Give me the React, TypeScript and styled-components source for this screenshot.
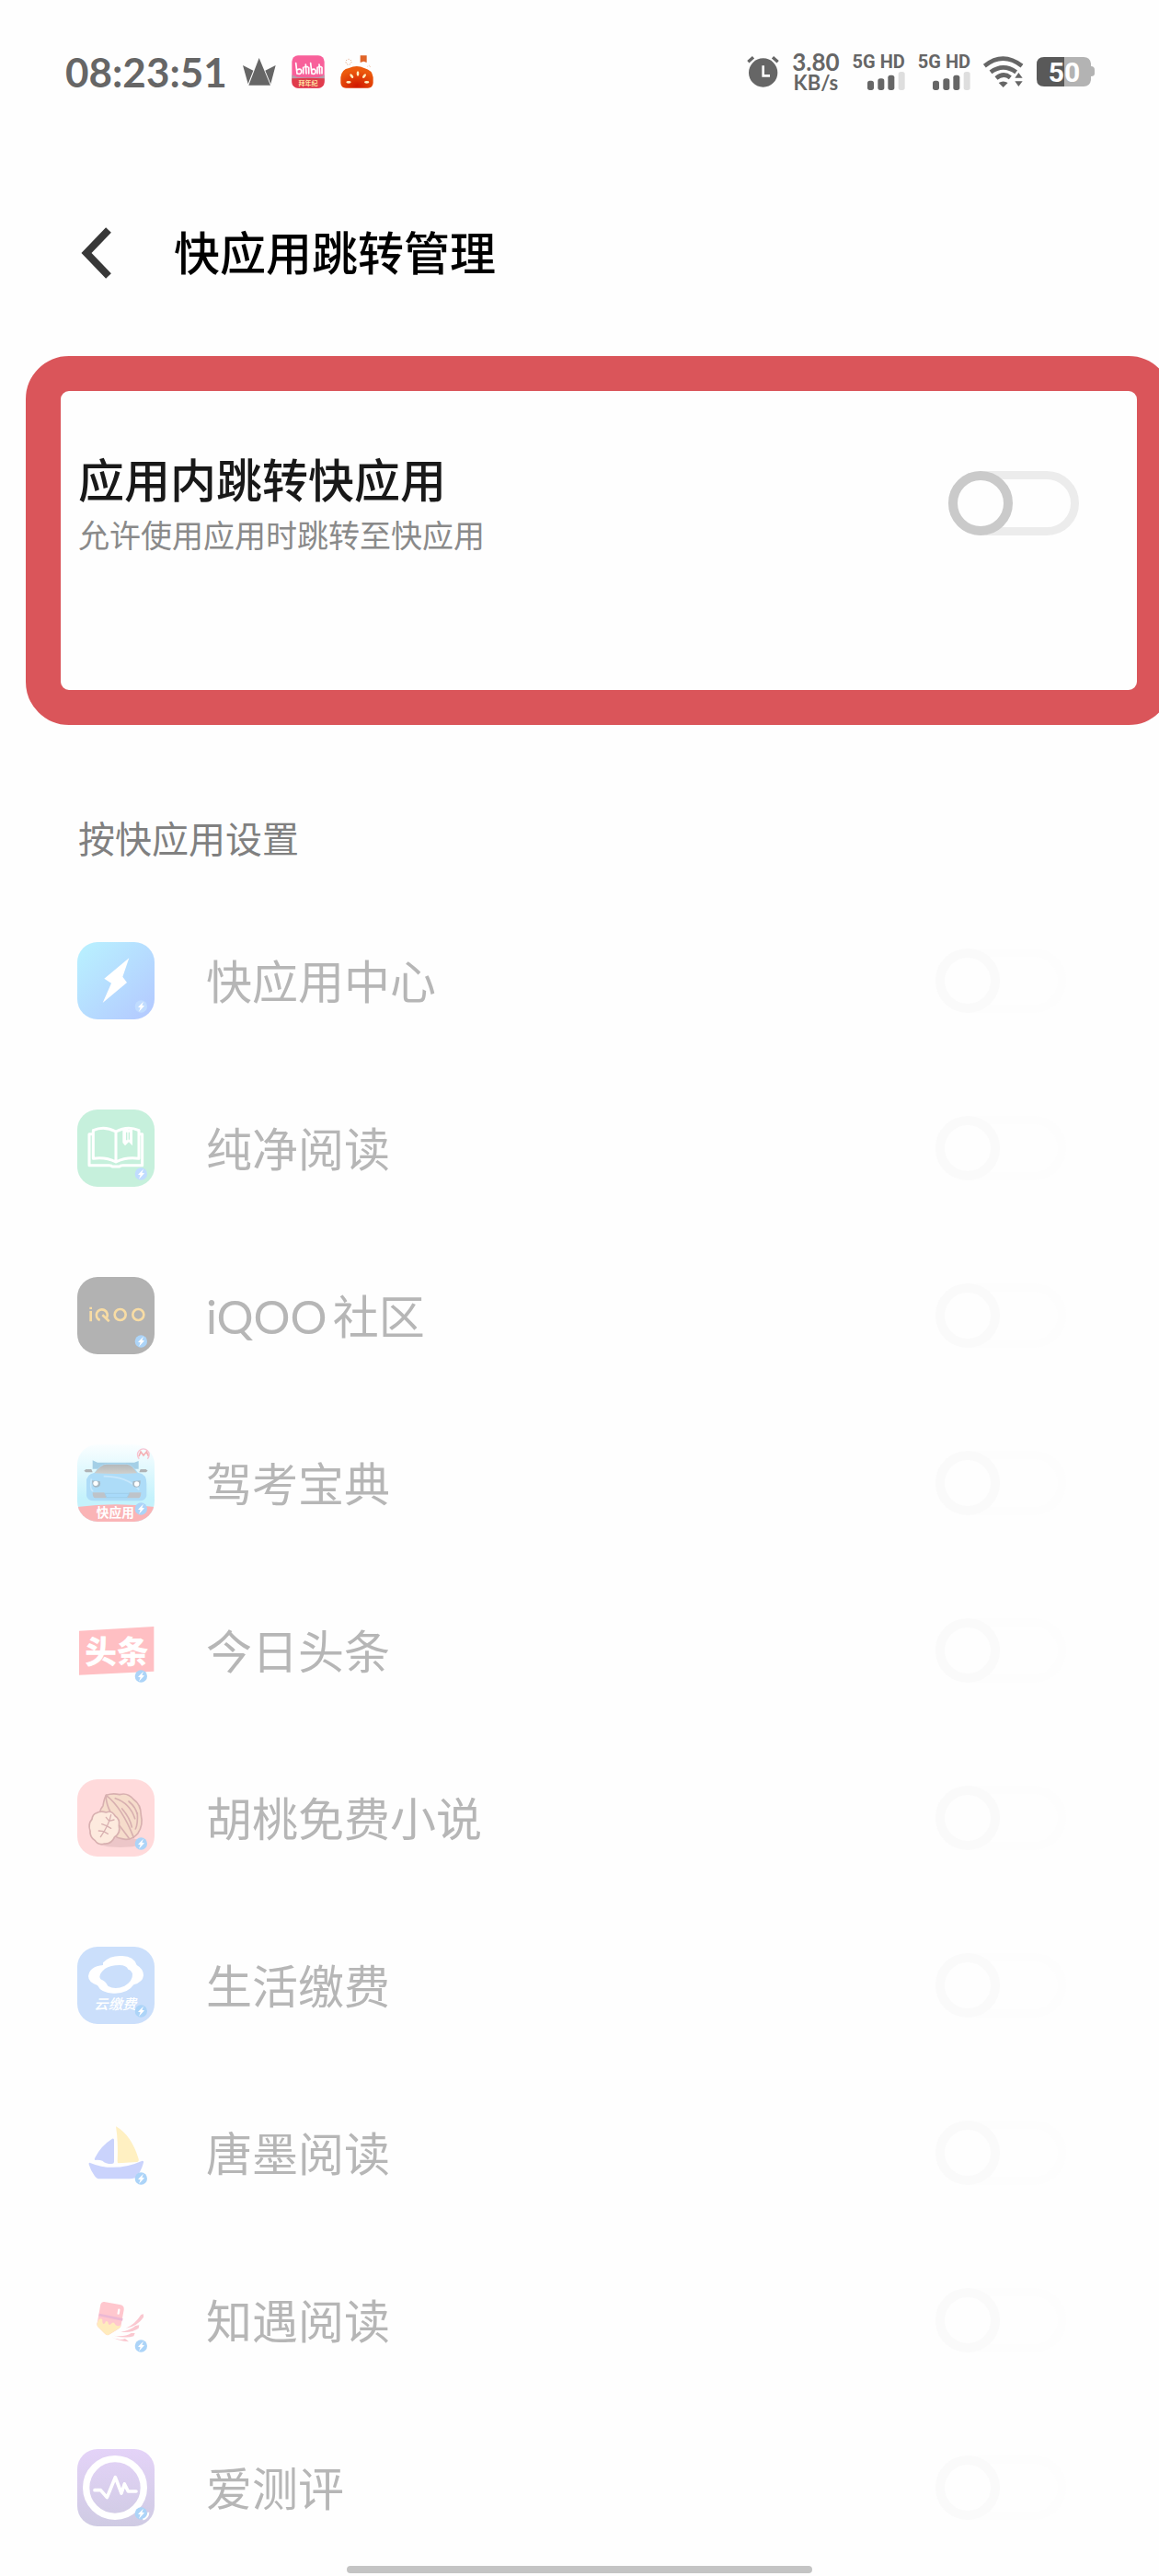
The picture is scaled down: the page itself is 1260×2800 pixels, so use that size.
import React, { useState } from 'react';
import styled, { createGlobalStyle } from 'styled-components';

const latin = `Lato, 'Noto Sans CJK SC', sans-serif`;

const GlobalStyle = createGlobalStyle`
  *, *::before, *::after { box-sizing: border-box; }
  body {
    margin: 0;
    background: #fefefe;
    color: #191919;
    font-family: ${latin};
  }
`;

const Page = styled.div`
  min-height: 100vh;
  overflow-x: clip;
  background: #fefefe;
`;

const StatusBar = styled.div`
  display: flex;
  justify-content: space-between;
  align-items: center;
  height: 156px;
  padding: 0 70px 0 71px;
  color: #666;
`;

const StatusGroup = styled.div<{ $gap: number }>`
  display: flex;
  align-items: center;
  gap: ${(p) => p.$gap}px;
`;

const Clock = styled.time`
  font-size: 44px;
  font-weight: 700;
  line-height: 50px;
`;

const Speed = styled.div`
  display: flex;
  flex-direction: column;
  align-items: center;
  font-weight: 700;
`;

const SpeedValue = styled.span`
  font-size: 26px;
  line-height: 24px;
`;

const SpeedUnit = styled.span`
  font-size: 22px;
  line-height: 22px;
`;

const Sim = styled.div`
  display: flex;
  flex-direction: column;
  align-items: flex-end;
  gap: 2px;
`;

const SimLabel = styled.span`
  font-family: Roboto, sans-serif;
  font-size: 20px;
  font-weight: 700;
  line-height: 18px;
`;

const Header = styled.header`
  display: flex;
  align-items: center;
  gap: 67px;
  padding: 84px 88px 77px;
`;

const BackButton = styled.button`
  display: flex;
  padding: 0;
  border: 0;
  background: none;
  cursor: pointer;
`;

const Title = styled.h1`
  margin: 0;
  color: #000;
  font-size: 50px;
  font-weight: 500;
  line-height: 70px;
`;

const Highlight = styled.section`
  display: flex;
  align-items: center;
  justify-content: space-between;
  margin: 0 -14px 0 28px;
  padding: 62px 63px 143px 19px;
  border: 38px solid #da555a;
  border-radius: 47px;
`;

const HighlightText = styled.label`
  display: flex;
  flex-direction: column;
`;

const HighlightTitle = styled.span`
  font-size: 50px;
  font-weight: 500;
  line-height: 70px;
`;

const HighlightHint = styled.span`
  color: #8a8a8a;
  font-size: 34px;
  line-height: 50px;
`;

const Switch = styled.input<{ $faint?: boolean }>`
  appearance: none;
  flex: none;
  display: flex;
  justify-content: ${(p) => (p.checked ? 'flex-end' : 'flex-start')};
  width: 142px;
  height: 70px;
  margin: 0;
  border: 9px solid ${(p) => (p.$faint ? '#fdfdfd' : '#ececec')};
  border-radius: 35px;

  &::before {
    content: '';
    flex: none;
    width: 70px;
    height: 70px;
    margin: -9px;
    border: 10px solid ${(p) => (p.$faint ? '#fafafa' : '#cacaca')};
    border-radius: 50%;
    background: #fefefe;
  }
`;

const SectionTitle = styled.h2`
  margin: 0;
  padding: 94px 85px 33px;
  color: #808080;
  font-size: 40px;
  font-weight: 400;
  line-height: 60px;
`;

const AppList = styled.ul`
  margin: 0;
  padding: 0;
  list-style: none;
`;

const AppRow = styled.li`
  display: flex;
  align-items: center;
  height: 182px;
  padding: 0 101px 0 84px;
`;

const AppName = styled.label`
  flex: 1;
  margin-left: 56px;
  padding-top: 2px;
  color: #b6b6b6;
  font-size: 50px;
  line-height: 70px;
  text-autospace: normal;
`;

const AppIcon = styled.svg`
  flex: none;
  width: 84px;
  height: 84px;
`;

const HomeIndicator = styled.div`
  position: fixed;
  bottom: 3px;
  left: 50%;
  width: 506px;
  height: 8px;
  margin-left: -253px;
  border-radius: 4px;
  background: #c4c4c4;
`;

/* ---------- status bar drawings ---------- */

const Crown = () => (
  <svg width="36" height="32" viewBox="0 0 108 96" fill="#666">
    <path d="M53 3 90 92H19ZM0 27 34 44 17 88ZM107 27 73 44 91 88Z" />
  </svg>
);

const Bilibili = () => (
  <svg width="36" height="36" viewBox="0 0 108 108">
    <defs>
      <clipPath id="bili"><rect x="1" y="1" width="106" height="106" rx="20" /></clipPath>
    </defs>
    <g clipPath="url(#bili)">
      <rect width="108" height="108" fill="#f8609a" />
      <path d="M0 64 20 72H88L108 64V84H0Z" fill="#b79aa8" />
      <path d="M0 76Q54 72 108 76V108H0Z" fill="#e03c4c" />
      <g fill="none" stroke="#fff" strokeWidth="5" strokeLinecap="round">
        <path d="M14 26 18 60Q34 64 32 50Q28 42 18 48M38 40V60M46 30 48 60M43 38H52M56 40V60" />
        <path d="M62 26 66 60Q80 64 78 50Q74 42 66 48M84 40V60M90 30 92 60M88 38H96M99 40V60" />
      </g>
      <text x="54" y="99" textAnchor="middle" fontSize="21" fontWeight="700" fill="#ffe0a0" fontFamily="'Noto Sans CJK SC', sans-serif">拜年纪</text>
    </g>
  </svg>
);

const Pumpkin = () => (
  <svg width="36" height="36" viewBox="0 0 108 108">
    <defs>
      <radialGradient id="pump" cx=".5" cy=".9" r=".7">
        <stop offset="0" stopColor="#d01800" />
        <stop offset="1" stopColor="#ec5a0c" />
      </radialGradient>
    </defs>
    <path d="M65 1H86V24L76 20 65 24Z" fill="#e06428" />
    <circle cx="27" cy="22" r="9" fill="none" stroke="#dc9468" strokeWidth="3" strokeDasharray="3 5" />
    <path d="M88 37 96 33 98 42" fill="none" stroke="#e8b090" strokeWidth="2" strokeDasharray="3 3" />
    <path d="M1 72Q4 46 28 42Q54 30 78 42Q104 48 107 72V90Q106 107 90 107H18Q2 107 1 90Z" fill="url(#pump)" />
    <g fill="#fff0c0">
      <ellipse cx="57" cy="60" rx="4" ry="8" />
      <ellipse cx="37" cy="68" rx="4" ry="8" transform="rotate(-38 37 68)" />
      <ellipse cx="78" cy="68" rx="4" ry="8" transform="rotate(38 78 68)" />
      <ellipse cx="27" cy="88" rx="8" ry="4" />
      <ellipse cx="86" cy="88" rx="8" ry="4" />
    </g>
  </svg>
);

const Alarm = () => (
  <svg width="35" height="36" viewBox="0 0 105 108">
    <circle cx="53" cy="57" r="47" fill="#666" />
    <path d="M4 22 21 7M101 22 84 7" stroke="#666" strokeWidth="10" />
    <path d="M53 34V67H75" fill="none" stroke="#fefefe" strokeWidth="8" />
  </svg>
);

const Signal = () => (
  <svg width="41" height="20" viewBox="0 0 123 60" fill="#666">
    <rect x="0" y="29" width="21" height="31" rx="8" />
    <rect x="34" y="22" width="21" height="38" rx="8" />
    <rect x="67" y="11" width="21" height="49" rx="8" />
    <rect x="101" y="0" width="21" height="60" rx="8" fill="#dedede" />
  </svg>
);

const Wifi = () => (
  <svg width="44" height="34" viewBox="0 0 132 102">
    <g fill="none" stroke="#666" strokeWidth="14">
      <path d="M4 32Q64 -16 126 32" />
      <path d="M24 52Q65 22 107 52" />
      <path d="M42 72Q66 52 88 70" />
    </g>
    <path d="M50 87Q65 78 80 87L65 102ZM103 71 115 54 128 71ZM103 82H128L115 99Z" fill="#666" />
  </svg>
);

const Battery = () => (
  <svg width="63" height="40" viewBox="0 -4 63 40">
    <path d="M29 0H51Q58 0 59 7V10Q63 10 63 14V18Q63 21 59 21V25Q58 32 51 32H29Z" fill="#b3b3b3" />
    <path d="M30 0H8Q0 0 0 8V24Q0 32 8 32H30Z" fill="#595959" />
    <text x="30" y="27" textAnchor="middle" fontSize="30" fontWeight="700" fill="#fff" fontFamily="Roboto, sans-serif">50</text>
  </svg>
);

/* ---------- app icons ---------- */

const Badge = ({ soft = false }: { soft?: boolean }) => (
  <g>
    <circle cx="208" cy="210" r="20" fill={soft ? '#c0dcff' : '#acd4f8'} />
    <path d="M216 194 198 212 206 214 201 227 219 208 211 206Z" fill="#fff" />
  </g>
);

const Tile = ({ fill }: { fill: string }) => <rect width="252" height="252" rx="66" fill={fill} />;

const CenterArt = () => (
  <>
    <defs>
      <linearGradient id="sky" x1="0" y1="0" x2="1" y2="1">
        <stop offset="0.1" stopColor="#b8eeff" />
        <stop offset="0.9" stopColor="#b4ccff" />
      </linearGradient>
    </defs>
    <Tile fill="url(#sky)" />
    <path d="M169 52 88 119 111 134 83 198 162 132 148 113Z" fill="#fff" />
    <Badge soft />
  </>
);

const BookArt = () => (
  <>
    <Tile fill="#c6f0dc" />
    <g fill="none" stroke="#fff" strokeWidth="9" strokeLinejoin="round">
      <path d="M126 72Q88 52 52 68V160Q92 154 126 171Q160 154 201 160V68Q164 52 126 72V168" />
      <path d="M52 80H39V182H104Q112 182 114 186H138Q140 182 148 182H212V80H201" />
    </g>
    <path d="M148 66H180V118L168 106 156 118 148 108Z" fill="#fff" />
    <path d="M161 74V100M169 74V98" stroke="#c6f0dc" strokeWidth="4" />
    <Badge soft />
  </>
);

const IqooArt = () => (
  <>
    <Tile fill="#b2b2b2" />
    <g fill="none" stroke="#f8dca4" strokeWidth="8">
      <path d="M44 111V145M44 98V105" />
      <path d="M74 141A18 18 0 1 1 96 133M82 124 104 145" />
      <circle cx="140" cy="123" r="18" />
      <circle cx="199" cy="123" r="18" />
    </g>
    <Badge />
  </>
);

const CarArt = () => (
  <>
    <defs>
      <linearGradient id="road" x1="0" y1="0" x2="0" y2="1">
        <stop offset="0" stopColor="#fafeff" />
        <stop offset="0.7" stopColor="#c4f2fc" />
      </linearGradient>
      <linearGradient id="glass" x1="0" y1="0" x2="0" y2="1">
        <stop offset="0" stopColor="#b4b8ba" />
        <stop offset="1" stopColor="#d0d0cc" />
      </linearGradient>
      <clipPath id="carTile"><rect width="252" height="252" rx="66" /></clipPath>
    </defs>
    <g clipPath="url(#carTile)">
      <rect width="252" height="252" fill="url(#road)" />
      <path d="M0 204Q126 188 252 204V252H0Z" fill="#fab4b6" />
      <path d="M50 52 66 59H186L200 54V80H50Z" fill="#a4cfe6" />
      <path d="M56 92Q76 62 98 62H158Q178 62 198 92Q228 96 226 130V168Q222 184 204 184H54Q34 184 30 168V124Q28 98 56 92Z" fill="#addcf8" />
      <path d="M56 94Q76 65 96 65H162Q178 66 195 94Q126 98 56 94Z" fill="url(#glass)" />
      <path d="M22 86 28 81H46L50 91 28 91ZM230 86 224 81H206L202 91 224 91Z" fill="#b0b4b6" />
      <path d="M86 104Q162 104 202 148M46 112Q40 150 52 152" fill="none" stroke="#c8e8fc" strokeWidth="5" />
      <path d="M48 118 74 120Q80 140 60 140Q48 140 48 118ZM206 118 182 120Q176 140 194 140Q208 140 206 118Z" fill="#a6b8c4" />
      <circle cx="60" cy="127" r="8" fill="#fff" />
      <circle cx="194" cy="129" r="8" fill="#fff" />
      <path d="M50 157H88L96 175H58Q50 174 50 157ZM208 157H170L162 175H200Q208 174 208 157Z" fill="#bec3c9" />
      <path d="M90 160H170L162 173H96Z" fill="#a8dafa" stroke="#9cc8e4" strokeWidth="2" />
      <text x="124" y="237" textAnchor="middle" fontSize="41" fontWeight="700" fill="#fff" fontFamily="'Noto Sans CJK SC', sans-serif">快应用</text>
    </g>
    <path d="M202 47A19 19 0 1 1 229 47" fill="none" stroke="#f8c4d2" strokeWidth="4" />
    <path d="M201 39 207 24 216 36 226 24 232 38" fill="none" stroke="#f4b0b4" strokeWidth="5" />
    <Badge />
  </>
);

const ToutiaoArt = () => (
  <>
    <path d="M6 62 250 48V194L6 206Z" fill="#ffbfc3" />
    <text x="129" y="168" textAnchor="middle" fontSize="104" fontWeight="900" fill="#fff" fontFamily="'Noto Sans CJK SC', sans-serif">头条</text>
    <Badge />
  </>
);

const WalnutArt = () => (
  <>
    <Tile fill="#ffdadb" />
    <ellipse cx="140" cy="206" rx="72" ry="16" fill="#ecc6c8" />
    <g stroke="#d8b0b0" strokeWidth="5" strokeLinejoin="round" strokeLinecap="round">
      <path d="M94 52Q116 44 138 50Q164 42 184 66Q208 82 208 118Q216 148 198 176Q176 202 146 194Q100 186 78 132Q66 108 84 86Q88 62 94 52Z" fill="#f6dccb" />
      <path d="M94 52Q146 92 184 190M94 52Q92 92 132 144Q154 172 170 194M124 62Q172 78 188 128M146 96Q172 126 178 156M196 110Q198 146 190 162M168 72Q192 92 196 116" fill="none" />
      <path d="M62 110Q78 102 94 108Q112 100 124 120Q140 130 136 152Q142 176 122 188Q112 212 88 210Q68 216 58 200Q40 188 42 168Q34 146 48 130Q50 114 62 110Z" fill="#fdeade" />
      <path d="M110 116Q104 148 76 188M104 136 120 132M104 136 94 124M96 152 110 160M96 152 80 146M86 170 100 178M86 170 70 168" fill="none" strokeWidth="4" />
    </g>
    <Badge />
  </>
);

const CloudArt = () => (
  <>
    <Tile fill="#cbdffb" />
    <path fillRule="evenodd" fill="#fff" d="M84 52Q106 28 146 30Q186 32 194 60Q216 72 216 94Q214 116 184 124Q164 154 118 152Q78 152 66 126Q36 116 36 96Q40 64 84 60ZM90 72Q66 92 76 106Q92 112 100 128Q124 142 154 128Q182 112 180 88Q176 76 166 74Q160 60 138 60Q108 60 90 72Z" />
    <text x="124" y="204" textAnchor="middle" fontSize="46" fontWeight="500" fontStyle="italic" fill="#fff" fontFamily="'Noto Sans CJK SC', sans-serif">云缴费</text>
    <Badge />
  </>
);

const BoatArt = () => (
  <>
    <path d="M126 40Q176 68 200 146Q202 154 194 156L134 160Q131 160 131 154Q134 90 126 40Z" fill="#fff0c2" />
    <path d="M114 80Q120 78 120 84V156Q120 162 112 162Q92 162 82 152Q70 148 58 150Q54 148 58 142Q76 104 114 80Z" fill="#cad3fc" />
    <path d="M40 158Q122 192 212 152Q218 152 216 158Q206 194 188 208Q180 211 170 211H74Q62 211 56 200Q44 184 38 164Q37 158 40 158Z" fill="#cad3fc" />
    <Badge />
  </>
);

const PencilArt = () => (
  <>
    <g strokeLinejoin="round">
      <path d="M88 66 142 76Q154 80 152 92L142 146Q138 152 128 158L102 174Q94 176 88 168L66 146Q62 138 66 130L76 74Q80 64 88 66Z" fill="#ffc7ce" />
      <path d="M69 126Q76 116 82 124V132Q84 142 90 136Q94 124 100 132Q102 146 110 138Q118 128 124 140Q134 150 142 140L140 150Q124 160 102 174Q94 176 88 168L66 146Q62 138 69 126Z" fill="#ffebbd" />
      <path d="M71 108 148 124" stroke="#ecb8d4" strokeWidth="8" />
      <path d="M136 92 134 104" stroke="#fff" strokeWidth="7" strokeLinecap="round" />
    </g>
    <path d="M158 152Q186 142 208 108L216 106 216 116Q196 146 158 152ZM142 164Q172 160 190 144L202 142 200 152Q178 168 142 164ZM118 176Q154 182 176 168L188 168 184 178Q160 186 118 176ZM112 181Q136 194 156 186L168 196 152 194Q130 192 112 181Z" fill="#fac8d0" />
    <Badge />
  </>
);

const PulseArt = () => (
  <>
    <defs>
      <linearGradient id="violet" x1="0" y1="0" x2="0" y2="1">
        <stop offset="0" stopColor="#e4d3f8" />
        <stop offset="1" stopColor="#cfcbe3" />
      </linearGradient>
    </defs>
    <Tile fill="url(#violet)" />
    <circle cx="123" cy="126" r="94" fill="none" stroke="#fff" strokeWidth="22" />
    <path d="M57 134H76L97 158 124 92 144 144 154 114 166 138H192" fill="none" stroke="#fff" strokeWidth="11" strokeLinecap="round" strokeLinejoin="round" />
    <Badge />
    <path d="M232 206A26 26 0 0 1 214 230" fill="none" stroke="#fff" strokeWidth="6" />
  </>
);

const apps = [
  { id: 'center', name: '快应用中心', Art: CenterArt },
  { id: 'book', name: '纯净阅读', Art: BookArt },
  { id: 'iqoo', name: 'iQOO社区', Art: IqooArt },
  { id: 'car', name: '驾考宝典', Art: CarArt },
  { id: 'toutiao', name: '今日头条', Art: ToutiaoArt },
  { id: 'walnut', name: '胡桃免费小说', Art: WalnutArt },
  { id: 'bills', name: '生活缴费', Art: CloudArt },
  { id: 'tangmo', name: '唐墨阅读', Art: BoatArt },
  { id: 'zhiyu', name: '知遇阅读', Art: PencilArt },
  { id: 'review', name: '爱测评', Art: PulseArt },
];

export default function App() {
  const [allowed, setAllowed] = useState(false);

  return (
    <Page>
      <GlobalStyle />
      <StatusBar>
        <StatusGroup $gap={17}>
          <Clock>08:23:51</Clock>
          <Crown />
          <Bilibili />
          <Pumpkin />
        </StatusGroup>
        <StatusGroup $gap={14}>
          <Alarm />
          <Speed>
            <SpeedValue>3.80</SpeedValue>
            <SpeedUnit>KB/s</SpeedUnit>
          </Speed>
          <Sim>
            <SimLabel>5G HD</SimLabel>
            <Signal />
          </Sim>
          <Sim>
            <SimLabel>5G HD</SimLabel>
            <Signal />
          </Sim>
          <Wifi />
          <Battery />
        </StatusGroup>
      </StatusBar>

      <Header>
        <BackButton type="button" aria-label="返回">
          <svg width="34" height="56" viewBox="0 0 34 56" fill="none" stroke="#383838" strokeWidth="8">
            <path d="M30 3 6 28 30 53" />
          </svg>
        </BackButton>
        <Title>快应用跳转管理</Title>
      </Header>

      <Highlight>
        <HighlightText htmlFor="allow-jump">
          <HighlightTitle>应用内跳转快应用</HighlightTitle>
          <HighlightHint>允许使用应用时跳转至快应用</HighlightHint>
        </HighlightText>
        <Switch
          id="allow-jump"
          type="checkbox"
          role="switch"
          checked={allowed}
          onChange={(e) => setAllowed(e.target.checked)}
        />
      </Highlight>

      <SectionTitle>按快应用设置</SectionTitle>
      <AppList>
        {apps.map(({ id, name, Art }) => (
          <AppRow key={id}>
            <AppIcon viewBox="0 0 252 252" aria-hidden="true">
              <Art />
            </AppIcon>
            <AppName htmlFor={id}>{name}</AppName>
            <Switch id={id} type="checkbox" role="switch" $faint disabled />
          </AppRow>
        ))}
      </AppList>
      <HomeIndicator />
    </Page>
  );
}
